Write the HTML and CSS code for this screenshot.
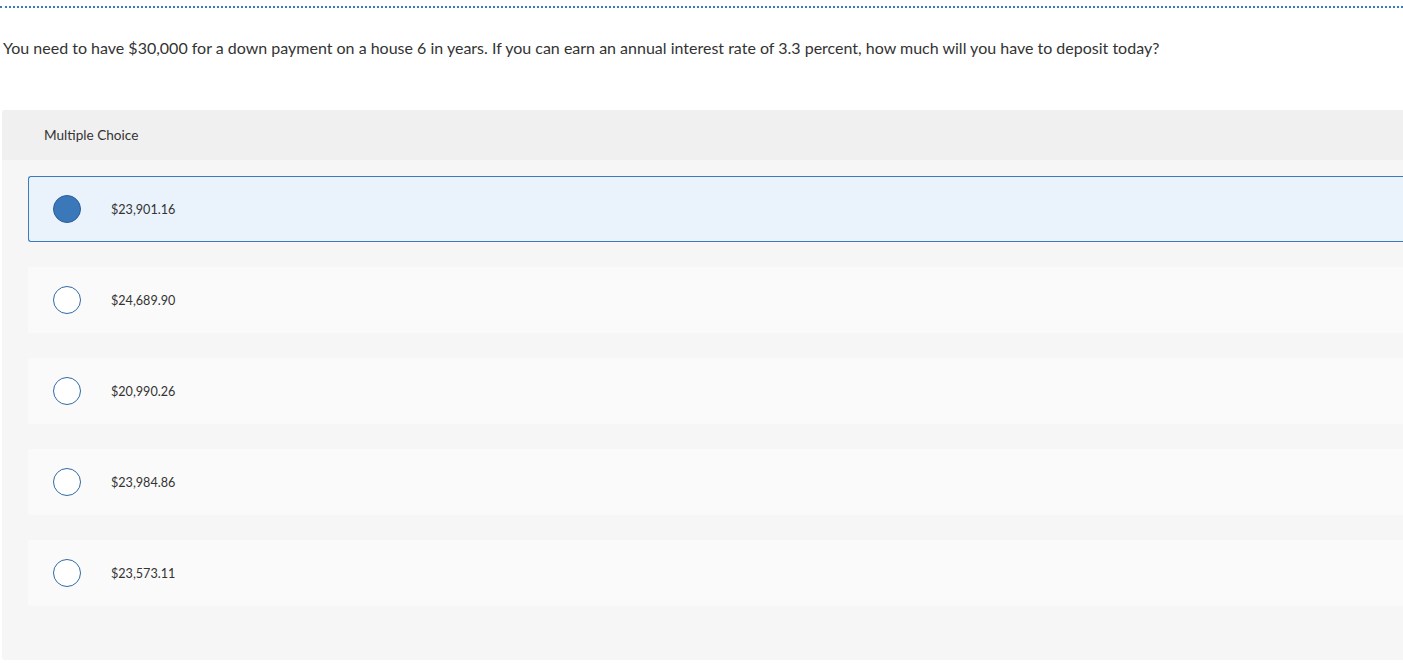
FILE: index.html
```html
<!DOCTYPE html>
<html>
<head>
<meta charset="utf-8">
<link rel="stylesheet" href="styles.css">
</head>
<body>
<div class="rule"></div>
<p class="question">You need to have $30,000 for a down payment on a house 6 in years. If you can earn an annual interest rate of 3.3 percent, how much will you have to deposit today?</p>
<div class="panel">
  <div class="panel-head">Multiple Choice</div>
  <div class="options">
    <div class="option selected"><span class="radio"></span><span class="label">$23,901.16</span></div>
    <div class="option"><span class="radio"></span><span class="label">$24,689.90</span></div>
    <div class="option"><span class="radio"></span><span class="label">$20,990.26</span></div>
    <div class="option"><span class="radio"></span><span class="label">$23,984.86</span></div>
    <div class="option"><span class="radio"></span><span class="label">$23,573.11</span></div>
  </div>
</div>
</body>
</html>
```

FILE: styles.css
```css
html, body {
  margin: 0;
  padding: 0;
  background: #ffffff;
  font-family: "Lato", "Liberation Sans", sans-serif;
  color: #333333;
  overflow: hidden;
}
.rule {
  margin-top: 6px;
  border-top: 2px dotted #3a7bbf;
}
.question {
  margin: 30px 0 0 3px;
  font-size: 16px;
  line-height: 20px;
  color: #333;
}
.panel {
  margin: 52px 0 0 2px;
  background: #f6f6f6;
  border-radius: 3px 0 0 3px;
  height: 550px;
}
.panel-head {
  height: 50px;
  background: #f0f0f0;
  display: flex;
  align-items: center;
  padding-left: 42px;
  font-size: 13.6px;
  color: #333;
  border-radius: 3px 0 0 0;
}
.options {
  padding: 16px 0 0 26px;
  display: flex;
  flex-direction: column;
  gap: 25px;
}
.option {
  height: 66px;
  box-sizing: border-box;
  background: #fafafa;
  border-radius: 3px 0 0 3px;
  display: flex;
  align-items: center;
  padding-left: 25px;
  font-size: 12.6px;
}
.option.selected {
  background: #eaf2fb;
  border: 1px solid #3a7bbf;
  border-right: none;
  padding-left: 24px;
}
.radio {
  width: 28px;
  height: 28px;
  box-sizing: border-box;
  border-radius: 50%;
  border: 1.5px solid #2f6aa8;
  background: #ffffff;
  flex: none;
}
.selected .radio {
  background: #3a78ba;
  border: 1px solid #2a5f9a;
}
.label {
  margin-left: 30px;
  color: #333;
}
```
